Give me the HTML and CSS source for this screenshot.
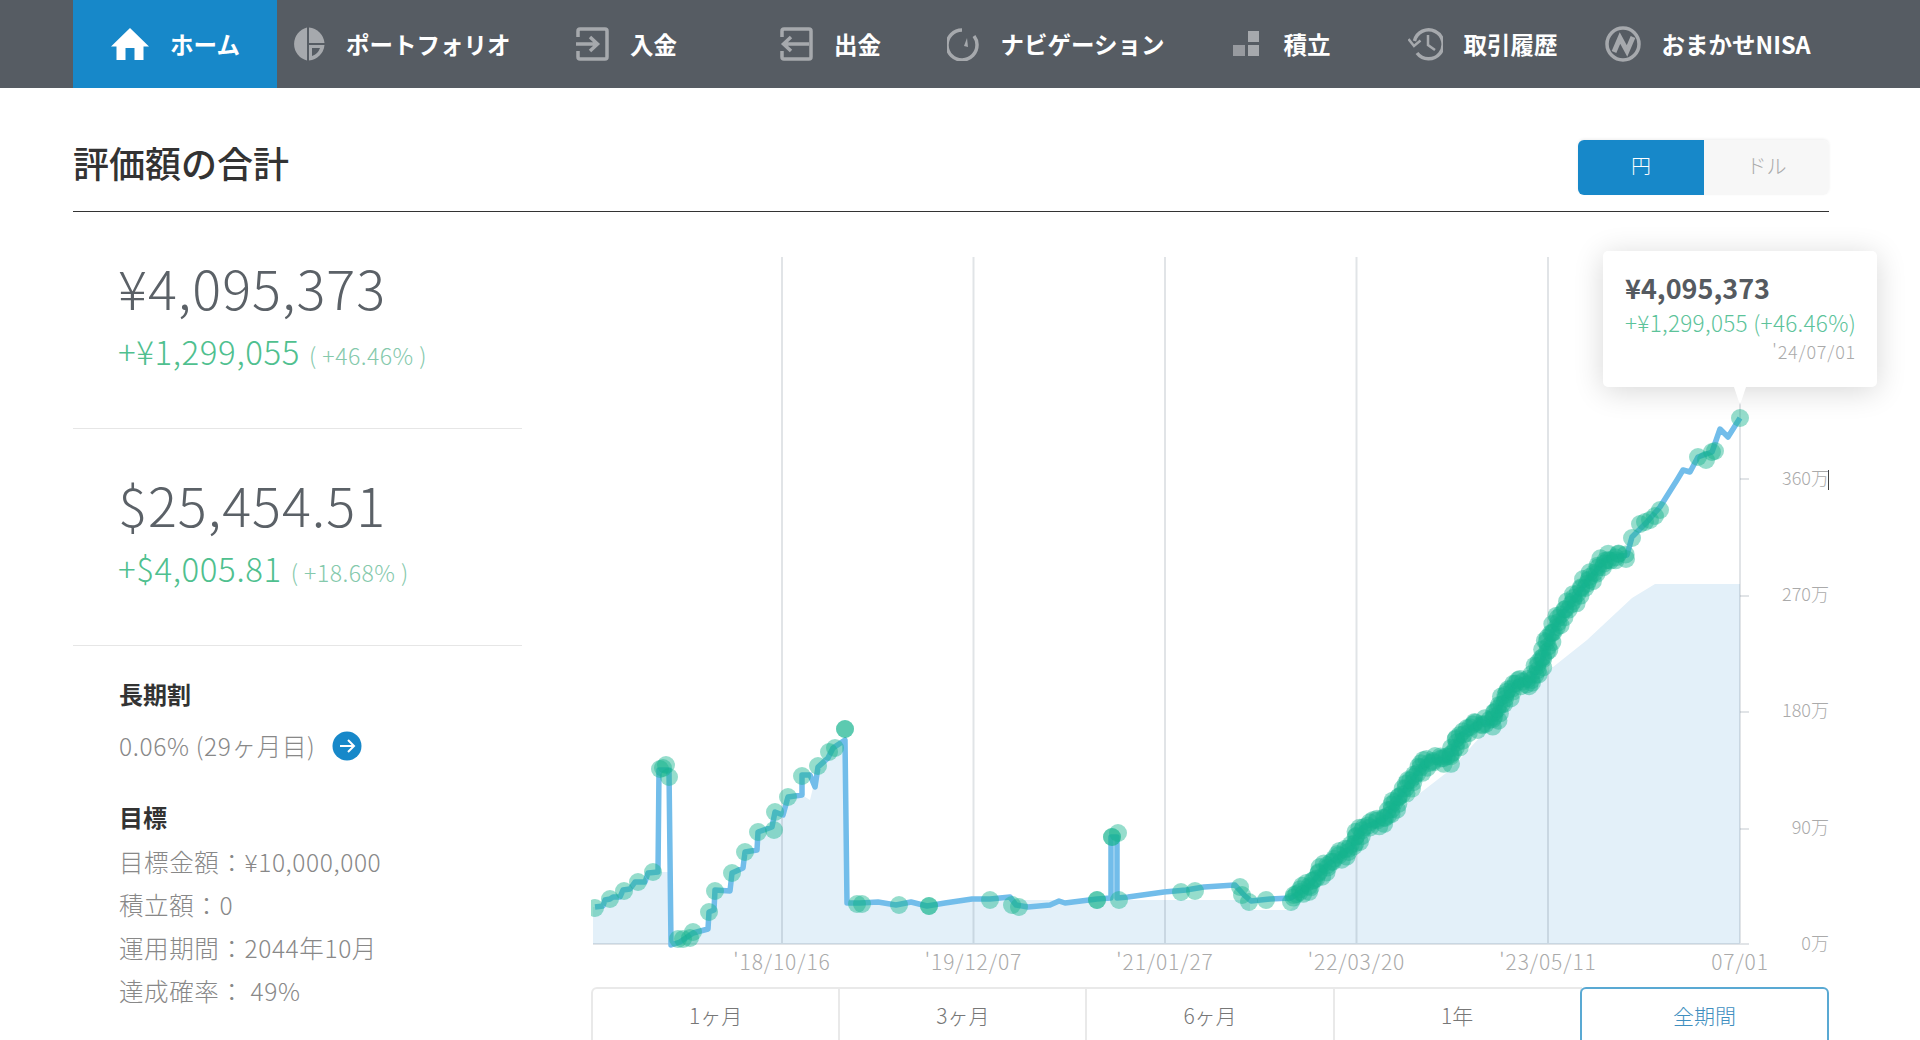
FILE: index.html
```html
<!DOCTYPE html>
<html lang="ja">
<head>
    <meta charset="UTF-8">
    <meta name="viewport" content="width=device-width, initial-scale=1.0">
    <title>評価額の合計</title>
    <link rel="stylesheet" href="styles.css">
</head>
<body>

    <nav class="nav">
        <a class="nav-item active">
            <svg class="nav-icon" width="38" height="32" viewBox="0 0 38 32"><path d="M19 0 38 18.500H32.500V32H23.500V20H14.500V32H5.500V18.500H0Z" fill="#fff"/></svg>
            <span>ホーム</span>
        </a>
        <a class="nav-item">
            <svg class="nav-icon" width="34" height="34" viewBox="0 0 34 34"><path d="M16 0.500V33.500A17 17 0 0 1 16 0.500Z" fill="#a6a9ad"/><path d="M18 0.500A17 17 0 0 1 33.500 16H18Z" fill="#a6a9ad"/><path d="M18 18H33.500A17 17 0 0 1 18 33.500Z" fill="#a6a9ad"/><path d="M21 21H29A12.500 12.500 0 0 1 21 29Z" fill="#565c63"/></svg>
            <span>ポートフォリオ</span>
        </a>
        <a class="nav-item">
            <svg class="nav-icon stroke" width="33" height="34" viewBox="0 0 33 34"><path d="M2 10V4Q2 2 4 2H29Q31 2 31 4V30Q31 32 29 32H4Q2 32 2 30V24"/><path d="M0 17H21M14 10 21.500 17 14 24"/></svg>
            <span>入金</span>
        </a>
        <a class="nav-item">
            <svg class="nav-icon stroke" width="33" height="34" viewBox="0 0 33 34"><path d="M2 10V4Q2 2 4 2H29Q31 2 31 4V30Q31 32 29 32H4Q2 32 2 30V24"/><path d="M29 17H4M11 10 3.500 17 11 24"/></svg>
            <span>出金</span>
        </a>
        <a class="nav-item">
            <svg class="nav-icon stroke" width="33" height="34" viewBox="0 0 33 34"><path d="M15 3A15 15 0 1 0 30 17.500Q30 13 27 9"/><path d="M20 11 17 19 21 20Z" fill="#a6a9ad" stroke="none"/></svg>
            <span>ナビゲーション</span>
        </a>
        <a class="nav-item nav-tsumitate">
            <svg class="nav-icon" width="26" height="26" viewBox="0 0 26 26"><rect x="15" y="0" width="11" height="11" fill="#a6a9ad"/><rect x="0" y="14" width="12" height="11" fill="#979a9f"/><rect x="15" y="14" width="11" height="11" fill="#a6a9ad"/></svg>
            <span>積立</span>
        </a>
        <a class="nav-item nav-history">
            <svg class="nav-icon stroke" width="35" height="34" viewBox="0 0 35 34"><path d="M6.500 14A14.500 14.500 0 1 1 9 26"/><path d="M0.500 12 6 19 12.500 13.500" stroke-width="2.500"/><path d="M20 8V18L27 23" stroke-width="2.500"/></svg>
            <span>取引履歴</span>
        </a>
        <a class="nav-item nav-nisa">
            <svg class="nav-icon stroke" width="36" height="36" viewBox="0 0 36 36"><circle cx="18" cy="18" r="16"/><path d="M9 26 15 12 22 25 28 11" stroke-width="5"/></svg>
            <span>おまかせNISA</span>
        </a>
    </nav>

    <main class="page">
        <header class="page-head">
            <h1 class="page-title">評価額の合計</h1>
            <div class="currency">
                <button class="currency-btn selected">円</button>
                <button class="currency-btn">ドル</button>
            </div>
        </header>

        <div class="content">
            <aside class="summary">
                <section class="total">
                    <div class="total-value">¥4,095,373</div>
                    <div class="total-gain">+¥1,299,055<small>( +46.46% )</small></div>
                </section>
                <section class="total">
                    <div class="total-value">$25,454.51</div>
                    <div class="total-gain">+$4,005.81<small>( +18.68% )</small></div>
                </section>
                <section class="detail">
                    <h2 class="detail-title">長期割</h2>
                    <div class="discount">
                        <span>0.06% (29ヶ月目)</span>
                        <svg width="30" height="30" viewBox="0 0 30 30"><circle cx="15" cy="15" r="14.500" fill="#1788c9"/><path d="M8 15H21.500M16 9 22 15 16 21" fill="none" stroke="#fff" stroke-width="2"/></svg>
                    </div>
                    <h2 class="detail-title goal">目標</h2>
                    <p class="goal-line">目標金額：¥10,000,000</p>
                    <p class="goal-line">積立額：0</p>
                    <p class="goal-line">運用期間：2044年10月</p>
                    <p class="goal-line">達成確率： 49%</p>
                </section>
            </aside>

            <div class="chart">
                <svg id="chart" class="chart-svg" width="1238" height="775" viewBox="591 212 1238 775">
                    <g id="area"></g>
                    <g class="grid">
                        <path d="M782 257V944M973.500 257V944M1165 257V944M1356.500 257V944M1548 257V944M1740 257V944M593 944H1749"/>
                        <path d="M1740 479H1749M1740 596H1749M1740 712H1749M1740 829H1749"/>
                    </g>
                    <g id="series"></g>
                    <g class="y-labels">
                        <text x="1829" y="485">360万</text>
                        <text x="1829" y="601">270万</text>
                        <text x="1829" y="717">180万</text>
                        <text x="1829" y="834">90万</text>
                        <text x="1829" y="950">0万</text>
                    </g>
                    <path class="caret" d="M1829 470V490"/>
                    <g class="x-labels">
                        <text x="782" y="970">'18/10/16</text>
                        <text x="973.500" y="970">'19/12/07</text>
                        <text x="1165" y="970">'21/01/27</text>
                        <text x="1356.500" y="970">'22/03/20</text>
                        <text x="1548" y="970">'23/05/11</text>
                        <text x="1740" y="970">07/01</text>
                    </g>
                </svg>

                <div class="tooltip">
                    <div class="tooltip-value">¥4,095,373</div>
                    <div class="tooltip-gain">+¥1,299,055 (+46.46%)</div>
                    <div class="tooltip-date">'24/07/01</div>
                </div>

                <div class="ranges">
                    <button class="range">1ヶ月</button>
                    <button class="range">3ヶ月</button>
                    <button class="range">6ヶ月</button>
                    <button class="range">1年</button>
                    <button class="range selected">全期間</button>
                </div>
            </div>
        </div>
    </main>

    <script src="chart.js"></script>
</body>
</html>
```

FILE: styles.css
```css
* {
    box-sizing: border-box;
}

html, body {
    height: 1040px;
    margin: 0;
    overflow: hidden;
}

body {
    background-color: #fff;
    font-family: "Noto Sans CJK JP", "Noto Sans", sans-serif;
    color: #333;
}

.nav {
    display: flex;
    height: 88px;
    padding-left: 73px;
    background-color: #565c63;
}

.nav-item {
    display: flex;
    align-items: center;
    justify-content: center;
    gap: 21px;
    min-width: 204px;
    padding: 0 14px;
    color: #fff;
    font-size: 23.500px;
    font-weight: 700;
    white-space: nowrap;
}

.nav-item.active {
    padding-left: 15px;
    background-color: #1788c9;
}

.nav-tsumitate {
    gap: 25px;
    padding-left: 16px;
}

.nav-history {
    padding-right: 18px;
}

.nav-nisa {
    padding-left: 18px;
}

.nav-icon {
    flex: none;
}

.nav-icon.stroke {
    fill: none;
    stroke: #a6a9ad;
    stroke-width: 3.500;
}

.page {
    padding: 0 91px 0 73px;
}

.page-head {
    display: flex;
    justify-content: space-between;
    align-items: center;
    height: 124px;
    padding: 52px 0 16px;
    border-bottom: 1px solid #333;
}

.page-title {
    margin: 0 0 11px;
    font-size: 36px;
    font-weight: 500;
    line-height: 46px;
}

.currency {
    display: flex;
    height: 55px;
    border-radius: 6px;
    box-shadow: 0 -1px 3px rgba(0, 0, 0, 0.07);
}

.currency-btn {
    width: 125px;
    padding: 0 0 4px;
    border: none;
    border-radius: 0 6px 6px 0;
    background-color: #f7f7f7;
    color: #aaa;
    font-family: inherit;
    font-size: 20px;
    font-weight: 300;
}

.currency-btn.selected {
    width: 126px;
    border-radius: 6px 0 0 6px;
    background-color: #1788c9;
    color: #fff;
}

.content {
    display: flex;
    gap: 69px;
}

.summary {
    flex: none;
    width: 449px;
}

.total {
    padding: 45px 0 51.500px 45px;
    border-bottom: 1px solid #e6e6e6;
}

.total-value {
    color: #5b6167;
    font-size: 54px;
    font-weight: 300;
    letter-spacing: 1px;
    line-height: 60px;
}

.total-gain {
    display: flex;
    align-items: baseline;
    margin-top: 11.500px;
    color: #4fc08f;
    font-size: 33px;
    font-weight: 300;
    letter-spacing: 0.600px;
    line-height: 44px;
}

.total-gain small {
    margin-left: 9px;
    padding-top: 2px;
    color: #85c9ac;
    font-size: 23px;
    letter-spacing: 0.500px;
}

.detail {
    padding: 30.500px 0 0 46px;
}

.detail-title {
    margin: 0;
    font-size: 24px;
    font-weight: 700;
    line-height: 34px;
}

.detail-title.goal {
    margin-top: 37px;
}

.discount {
    display: flex;
    align-items: center;
    gap: 17px;
    height: 34px;
    margin-top: 18px;
    color: #888;
    font-size: 24.500px;
    font-weight: 300;
    letter-spacing: 0.650px;
}

.goal-line {
    margin: 0;
    color: #888;
    font-size: 24.500px;
    font-weight: 300;
    letter-spacing: 0.600px;
    line-height: 43px;
}

.detail-title.goal + .goal-line {
    margin-top: 6px;
}

.chart {
    position: relative;
    flex: none;
    width: 1238px;
}

.chart-svg {
    display: block;
}

.grid path {
    fill: none;
    stroke: rgba(80, 95, 110, 0.17);
    stroke-width: 2;
}

.y-labels text {
    fill: #aaa;
    font-size: 18px;
    font-weight: 300;
    text-anchor: end;
}

.x-labels text {
    fill: #aaa;
    font-size: 21px;
    font-weight: 300;
    letter-spacing: 0.900px;
    text-anchor: middle;
}

.caret {
    stroke: #444;
    stroke-width: 2;
}

.tooltip {
    position: absolute;
    top: 39px;
    left: 1012px;
    width: 274px;
    height: 136px;
    padding: 19px 21px 0 22px;
    border-radius: 5px;
    background-color: #fff;
    box-shadow: 0 4px 30px rgba(0, 0, 0, 0.16);
}

.tooltip::after {
    content: "";
    position: absolute;
    top: 136px;
    left: 131px;
    border-top: 18px solid #fff;
    border-left: 6px solid transparent;
    border-right: 6px solid transparent;
}

.tooltip-value {
    color: #555a60;
    font-size: 27px;
    font-weight: 700;
    line-height: 36px;
}

.tooltip-gain {
    color: #5cc39a;
    font-size: 22.500px;
    font-weight: 300;
    letter-spacing: 0.300px;
    line-height: 32px;
    white-space: nowrap;
}

.tooltip-date {
    color: #aaa;
    font-size: 18px;
    font-weight: 300;
    letter-spacing: 0.800px;
    line-height: 26px;
    text-align: right;
}

.ranges {
    display: flex;
    height: 70px;
}

.range {
    flex: 1;
    height: 100%;
    padding: 0 0 14px;
    border: 2px solid #e9e9e9;
    border-left-width: 0;
    background-color: #fff;
    color: #777;
    font-family: inherit;
    font-size: 21px;
    font-weight: 300;
}

.range:first-child {
    border-left-width: 2px;
    border-top-left-radius: 6px;
}

.range.selected {
    margin-left: -2px;
    border: 2px solid #59a9d3;
    border-radius: 6px 6px 0 0;
    color: #3f8fc0;
}
```

FILE: chart.js
```js
// all coordinates are page pixels, the svg viewBox lines up with the page
const NS = 'http://www.w3.org/2000/svg';

const LINE = [
    [595,907],[603,906],[605,900],[610,899],[613,897],[620,897],[623,890],[630,889],[635,882],[645,882],
    [648,873],[658,872],[659,770],[669,770],[671,945],[680,942],[693,933],[708,929],[709,912],[714,910],
    [715,890],[730,891],[732,873],[743,868],[745,852],[757,850],[758,832],[772,827],[775,812],[783,815],
    [788,797],[802,795],[802,775],[810,775],[815,787],[818,767],[828,758],[833,748],[845,740],[847,903],
    [860,903],[878,902],[896,905],[911,902],[927,906],[945,903],[972,899],[990,899],[1010,897],[1016,905],
    [1028,907],[1050,905],[1059,901],[1065,903],[1097,899],[1111,898],[1111,837],[1117,837],[1117,898],
    [1128,897],[1164,892],[1186,890],[1204,887],[1235,885],[1244,895],[1251,901],[1270,899],[1291,898],
    [1308,887],[1327,865],[1352,847],[1362,828],[1385,819],[1396,802],[1417,773],[1427,760],[1448,760],
    [1461,735],[1480,722],[1492,723],[1503,700],[1517,682],[1530,683],[1542,660],[1550,637],[1560,617],
    [1575,598],[1588,580],[1607,558],[1627,555],[1632,537],[1647,522],[1660,507],[1677,480],[1683,470],
    [1690,472],[1698,457],[1712,452],[1720,429],[1728,437],[1740,418]
];

const AREA = [
    [593,944],[593,907],[603,906],[605,900],[610,899],[613,897],[620,897],[623,890],[630,889],[635,882],
    [645,882],[648,873],[658,872],[669,872],[671,944],[680,942],[693,933],[708,929],[709,912],[714,910],
    [715,890],[730,891],[732,873],[743,868],[745,852],[757,850],[758,832],[772,827],[775,812],[783,815],
    [788,797],[802,795],[810,800],[818,767],[828,758],[833,748],[845,740],[847,903],[896,905],[945,903],
    [972,899],[1010,900],[1250,900],[1250,910],[1290,910],[1362,838],[1450,770],[1500,715],[1543,675],
    [1587,640],[1632,598],[1655,584],[1740,584],[1740,944]
];

const DOTS = [
    [595,908],[610,899],[624,891],[638,882],[653,872],[660,769],[666,765],[669,777],[663,768],
    [678,939],[683,939],[690,938],[693,932],[709,912],[715,891],[732,873],[745,852],[758,832],
    [774,830],[775,812],[788,797],[802,776],[818,766],[829,752],[835,748],[845,729],[845,729],
    [857,904],[862,904],[899,905],[929,906],[929,906],[990,900],[1012,905],[1019,907],
    [1097,900],[1097,900],[1112,837],[1112,837],[1118,833],[1119,900],[1181,892],[1195,891],
    [1240,887],[1242,895],[1249,902],[1266,900],
    [1632,538],[1640,524],[1645,522],[1650,520],[1655,516],[1660,510],
    [1698,457],[1706,460],[1712,452],[1715,451],[1740,418]
];

function add(parent, name, attrs) {
    const el = document.createElementNS(NS, name);
    for (const key in attrs) {
        el.setAttribute(key, attrs[key]);
    }
    parent.appendChild(el);
}

function pointsText(list) {
    return list.map(p => p.join(',')).join(' ');
}

// the long climb is too many dots to list, so they are spread along the line
function denseDots(fromX, toX, step) {
    const dots = [];
    for (let i = 1; i < LINE.length; i++) {
        const [x1, y1] = LINE[i - 1];
        const [x2, y2] = LINE[i];
        if (x1 < fromX || x2 > toX) continue;
        const count = Math.ceil(Math.hypot(x2 - x1, y2 - y1) / step);
        for (let n = 0; n < count; n++) {
            const k = dots.length;
            dots.push([
                x1 + (x2 - x1) * n / count + Math.sin(k * 1.7) * 3.5,
                y1 + (y2 - y1) * n / count + Math.cos(k * 2.3) * 4
            ]);
        }
    }
    return dots;
}

add(document.getElementById('area'), 'polygon', {
    points: pointsText(AREA),
    fill: '#e3f0f9'
});

const series = document.getElementById('series');
add(series, 'polyline', {
    points: pointsText(LINE),
    fill: 'none',
    stroke: '#72bdea',
    'stroke-width': 5.5,
    'stroke-linejoin': 'round'
});

DOTS.concat(denseDots(1291, 1630, 2.5)).forEach(([x, y]) => {
    add(series, 'circle', {
        cx: x,
        cy: y,
        r: 9,
        fill: '#17b48d',
        'fill-opacity': 0.45
    });
});
```
